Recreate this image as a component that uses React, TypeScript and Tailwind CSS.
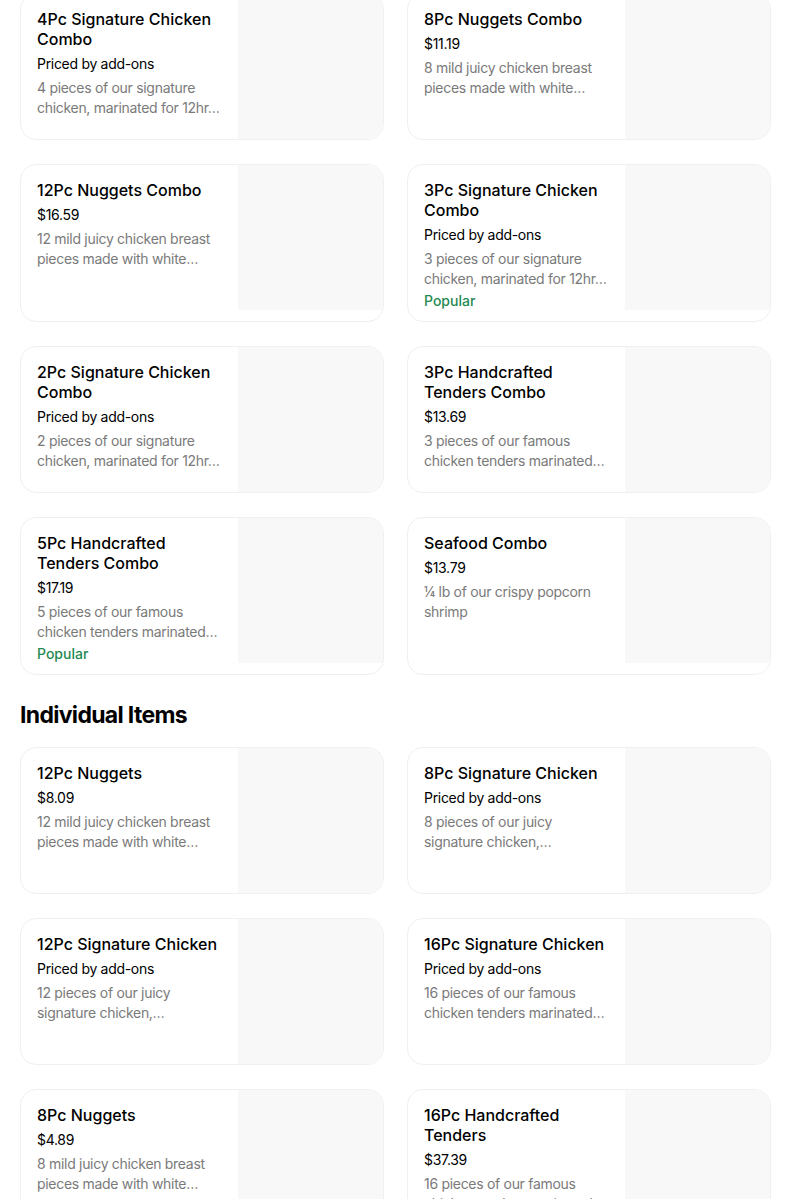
import React from "react";

type Item = {
  title: string;
  price: string;
  desc: string;
  popular?: boolean;
};

const combos: Item[] = [
  { title: "4Pc Signature Chicken Combo", price: "Priced by add-ons", desc: "4 pieces of our signature chicken, marinated for 12hr…" },
  { title: "8Pc Nuggets Combo", price: "$11.19", desc: "8 mild juicy chicken breast pieces made with white…" },
  { title: "12Pc Nuggets Combo", price: "$16.59", desc: "12 mild juicy chicken breast pieces made with white…" },
  { title: "3Pc Signature Chicken Combo", price: "Priced by add-ons", desc: "3 pieces of our signature chicken, marinated for 12hr…", popular: true },
  { title: "2Pc Signature Chicken Combo", price: "Priced by add-ons", desc: "2 pieces of our signature chicken, marinated for 12hr…" },
  { title: "3Pc Handcrafted Tenders Combo", price: "$13.69", desc: "3 pieces of our famous chicken tenders marinated…" },
  { title: "5Pc Handcrafted Tenders Combo", price: "$17.19", desc: "5 pieces of our famous chicken tenders marinated…", popular: true },
  { title: "Seafood Combo", price: "$13.79", desc: "¼ lb of our crispy popcorn shrimp" },
];

const individual: Item[] = [
  { title: "12Pc Nuggets", price: "$8.09", desc: "12 mild juicy chicken breast pieces made with white…" },
  { title: "8Pc Signature Chicken", price: "Priced by add-ons", desc: "8 pieces of our juicy signature chicken, marinated…" },
  { title: "12Pc Signature Chicken", price: "Priced by add-ons", desc: "12 pieces of our juicy signature chicken, marinated…" },
  { title: "16Pc Signature Chicken", price: "Priced by add-ons", desc: "16 pieces of our famous chicken tenders marinated…" },
  { title: "8Pc Nuggets", price: "$4.89", desc: "8 mild juicy chicken breast pieces made with white…" },
  { title: "16Pc Handcrafted Tenders", price: "$37.39", desc: "16 pieces of our famous chicken tenders marinated…" },
];

function Card({ item }: { item: Item }) {
  return (
    <div className="flex h-full overflow-hidden rounded-2xl border border-[#f0f0f0] bg-white">
      <div className="min-w-0 flex-1 pl-4 pr-[15px] pt-[15px] pb-[10px]">
        <div className="text-[16px] font-medium leading-5 text-black">{item.title}</div>
        <div className="mt-[5px] text-[14px] leading-5 tracking-[-0.3px] text-black">{item.price}</div>
        <div className="mt-1 line-clamp-2 text-[14px] leading-5 tracking-[-0.3px] text-[#7a7a7a]">{item.desc}</div>
        {item.popular && (
          <div className="mt-[2px] text-[14px] font-medium leading-5 text-[#1f8a52]">Popular</div>
        )}
      </div>
      <div className="h-[145px] w-[145px] shrink-0 self-start bg-[#f8f8f8]" />
    </div>
  );
}

function Grid({ items }: { items: Item[] }) {
  return (
    <div className="grid grid-cols-[364px_364px] gap-x-[23px] gap-y-6">
      {items.map((it, i) => (
        <Card key={i} item={it} />
      ))}
    </div>
  );
}

export default function App() {
  return (
    <div
      className="min-h-screen bg-white px-5"
      style={{ fontFamily: "Inter, 'Noto Sans', 'Liberation Sans', sans-serif" }}
    >
      <div className="-mt-[7px]">
        <Grid items={combos} />
        <h2 className="mt-6 mb-4 text-[23px] font-bold leading-8 tracking-[-0.03em] text-black">
          Individual Items
        </h2>
        <Grid items={individual} />
      </div>
    </div>
  );
}
